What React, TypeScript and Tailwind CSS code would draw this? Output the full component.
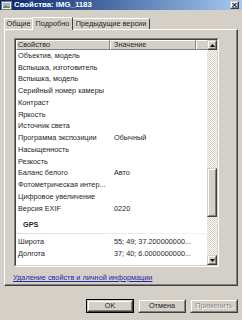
import React from "react";

const rows: [string, string][] = [
  ["Объектив, модель", ""],
  ["Вспышка, изготовитель", ""],
  ["Вспышка, модель", ""],
  ["Серийный номер камеры", ""],
  ["Контраст", ""],
  ["Яркость", ""],
  ["Источник света", ""],
  ["Программа экспозиции", "Обычный"],
  ["Насыщенность", ""],
  ["Резкость", ""],
  ["Баланс белого", "Авто"],
  ["Фотометрическая интер...", ""],
  ["Цифровое увеличение", ""],
  ["Версия EXIF", "0220"],
];

const gps: [string, string][] = [
  ["Широта", "55; 49; 37.200000000..."],
  ["Долгота", "37; 40; 6.0000000000..."],
];

function Raised({ className, children }: { className?: string; children?: React.ReactNode }) {
  return (
    <div className={"border border-t-[#d4d0c8] border-l-[#d4d0c8] border-r-[#404040] border-b-[#404040] bg-[#d4d0c8] " + (className ?? "")}>
      <div className="w-full h-full border border-t-white border-l-white border-r-[#808080] border-b-[#808080] flex items-center justify-center">
        {children}
      </div>
    </div>
  );
}

function Row({ name, value }: { name: string; value: string }) {
  return (
    <div className="h-[11.75px] flex items-center text-[7.3px] leading-[10px] text-[#1e1e1e] whitespace-nowrap">
      <div className="w-[94px] pl-[2px] overflow-hidden">{name}</div>
      <div className="w-[86px] pl-[4px] overflow-hidden">{value}</div>
    </div>
  );
}

export default function App() {
  return (
    <div
      className="w-[242px] h-[320px] bg-[#d4d0c8] flex flex-col overflow-hidden"
      style={{ fontFamily: '"Liberation Sans", Arial, sans-serif' }}
    >
      {/* Title bar */}
      <div className="h-[10px] flex items-center bg-gradient-to-r from-[#0a246a] to-[#a6caf0]">
        <svg width="11" height="9" viewBox="0 0 11 9" className="ml-[1px]">
          <rect x="0.5" y="0.5" width="10" height="8" fill="#e8e8e8" stroke="#7a7a7a" />
          <rect x="2" y="2" width="7" height="5" fill="#9db8d8" />
          <path d="M2 7 L4.5 4 L6.5 6 L7.5 5 L9 7 Z" fill="#5a8a4a" />
        </svg>
        <span className="ml-[2px] text-white font-bold text-[7.8px] leading-[10px] whitespace-nowrap">
          Свойства: IMG_1183
        </span>
        <div className="flex-1" />
        <Raised className="w-[9px] h-[8px] mr-[3px]">
          <svg width="5" height="4" viewBox="0 0 5 4">
            <path d="M0.5 0 L4.5 4 M4.5 0 L0.5 4" stroke="#000" strokeWidth="1" />
          </svg>
        </Raised>
      </div>

      {/* Tabs */}
      <div className="h-[12px] mt-[7px] px-[4px] flex items-end text-[7.3px] leading-[10px] text-[#1e1e1e] whitespace-nowrap">
        <div className="w-[29px] h-[11px] border-t border-l border-t-white border-l-white border-r border-r-[#808080] flex items-center justify-center">
          Общие
        </div>
        <div className="relative z-10 w-[41px] h-[13px] -mb-px bg-[#d4d0c8] border-t border-l border-t-white border-l-white border-r border-r-[#404040] flex items-center justify-center -ml-px">
          Подробно
        </div>
        <div className="w-[77px] h-[11px] border-t border-t-white border-r border-r-[#404040] flex items-center justify-center">
          Предыдущие версии
        </div>
      </div>

      {/* Panel */}
      <div className="mx-[4px] h-[257px] border border-t-white border-l-white border-r-[#404040] border-b-[#404040]">
        <div className="w-full h-full border-r border-b border-r-[#808080] border-b-[#808080] pl-[9px] pt-[8px] flex flex-col">
          {/* List */}
          <div className="w-[205px] h-[229px] border border-t-[#808080] border-l-[#808080] border-r-white border-b-white">
            <div className="w-full h-full border border-t-[#404040] border-l-[#404040] border-r-[#d4d0c8] border-b-[#d4d0c8] flex bg-white">
              <div className="flex-1 flex flex-col overflow-hidden">
                {/* Header */}
                <div className="h-[10px] flex text-[7.3px] leading-[8px] text-[#2a2a2a] shrink-0 whitespace-nowrap">
                  <div className="w-[94px] bg-[#d4d0c8] border-t border-l border-t-white border-l-white border-r border-b border-r-[#808080] border-b-[#808080] pl-[1px] flex items-center">
                    Свойство
                  </div>
                  <div className="w-[86px] bg-[#d4d0c8] border-t border-l border-t-white border-l-white border-r border-b border-r-[#808080] border-b-[#808080] pl-[3px] flex items-center">
                    Значение
                  </div>
                  <div className="flex-1 bg-[#d4d0c8] border-t border-l border-t-white border-l-white border-b border-b-[#808080]" />
                </div>
                {rows.map(([n, v]) => (
                  <Row key={n} name={n} value={v} />
                ))}
                <div className="h-[22px] pt-[5px] shrink-0">
                  <div className="pl-[7px] text-[7.3px] leading-[10px] font-bold text-[#1e1e1e]">GPS</div>
                  <div className="mt-[3px] h-px bg-gradient-to-r from-[#d8dde6] to-[#f2f4f8]" />
                </div>
                {gps.map(([n, v]) => (
                  <Row key={n} name={n} value={v} />
                ))}
              </div>
              {/* Scrollbar */}
              <div className="w-[10px] flex flex-col shrink-0">
                <Raised className="w-[10px] h-[10px] shrink-0">
                  <svg width="5" height="3" viewBox="0 0 5 3">
                    <path d="M2.5 0 L5 3 L0 3 Z" fill="#000" />
                  </svg>
                </Raised>
                <div className="flex-1 flex flex-col bg-[repeating-conic-gradient(#d4d0c8_0_25%,#ffffff_0_50%)] bg-[length:2px_2px]">
                  <div className="h-[118px]" />
                  <Raised className="w-[10px] h-[49px]" />
                </div>
                <Raised className="w-[10px] h-[10px] shrink-0">
                  <svg width="5" height="3" viewBox="0 0 5 3">
                    <path d="M0 0 L5 0 L2.5 3 Z" fill="#000" />
                  </svg>
                </Raised>
              </div>
            </div>
          </div>
          {/* Link */}
          <div className="mt-[6px] -ml-px text-[7.3px] leading-[10px] text-[#2828a0] underline whitespace-nowrap">
            Удаление свойств и личной информации
          </div>
        </div>
      </div>

      {/* Buttons */}
      <div className="mt-[13px] pr-[4px] flex justify-end gap-[4px] text-[7.3px] leading-[10px]">
        <div className="w-[48px] h-[14px] border border-black">
          <Raised className="w-full h-full">
            <span className="text-[#1e1e1e]">OK</span>
          </Raised>
        </div>
        <Raised className="w-[48px] h-[14px]">
          <span className="text-[#1e1e1e]">Отмена</span>
        </Raised>
        <Raised className="w-[48px] h-[14px]">
          <span className="text-[#8a8a8a] [text-shadow:1px_1px_0_#ffffff]">Применить</span>
        </Raised>
      </div>
    </div>
  );
}
